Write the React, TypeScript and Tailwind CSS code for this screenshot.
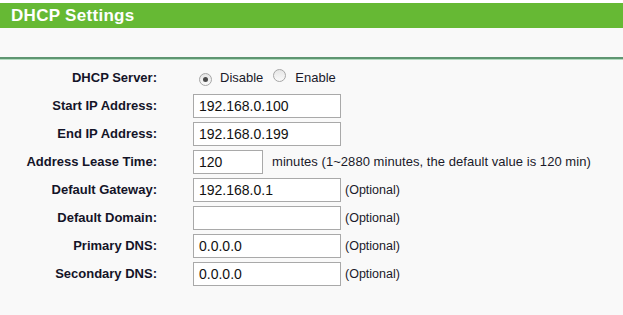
import React from "react";

const Radio = ({ checked }: { checked?: boolean }) => (
  <span className="inline-flex h-[13px] w-[13px] items-center justify-center rounded-full border border-[#a6a6a6] bg-gradient-to-b from-[#e6e6e6] to-[#fafafa]">
    {checked ? <span className="h-[5px] w-[5px] rounded-full bg-[#4a4a4a]" /> : null}
  </span>
);

const Field = ({ value, w = "w-[148px]" }: { value: string; w?: string }) => (
  <div className={`flex h-[24px] ${w} items-center border border-[#a9a9a9] bg-white pl-[5px] text-[14px] text-[#111]`}>
    {value}
  </div>
);

const Row = ({ label, children }: { label: string; children: React.ReactNode }) => (
  <div className="flex h-[28px] items-center">
    <div className="w-[157px] text-right text-[13px] font-bold text-[#141428]">{label}</div>
    <div className="ml-[36px] flex items-center">{children}</div>
  </div>
);

const Opt = () => <span className="ml-[4px] text-[12.5px] text-[#1a1a2a]">(Optional)</span>;

export default function App() {
  return (
    <div
      className="h-[315px] w-[623px] bg-[#f9f9f9]"
      style={{ fontFamily: '"Liberation Sans", Arial, sans-serif' }}
    >
      <div className="h-[3px] bg-white" />
      <div className="flex h-[25px] items-center bg-[#66b934] pl-[11px] text-[17px] font-bold tracking-[0.3px] text-white">
        DHCP Settings
      </div>
      <div className="h-[29px]" />
      <div className="h-[2px] bg-[#5f9672]" />
      <div className="h-[1px] bg-[#b3dcc0]" />
      <div className="pt-[4px]">
        <Row label="DHCP Server:">
          <div className="flex items-center text-[13px] text-[#1a1a2a]">
            <span className="ml-[6px]"><Radio checked /></span>
            <span className="ml-[8px]">Disable</span>
            <span className="ml-[10px]"><Radio /></span>
            <span className="ml-[9px]">Enable</span>
          </div>
        </Row>
        <Row label="Start IP Address:">
          <Field value="192.168.0.100" />
        </Row>
        <Row label="End IP Address:">
          <Field value="192.168.0.199" />
        </Row>
        <Row label="Address Lease Time:">
          <Field value="120" w="w-[70px]" />
          <span className="ml-[9px] text-[13px] tracking-[0.05px] text-[#1a1a2a]">
            minutes (1~2880 minutes, the default value is 120 min)
          </span>
        </Row>
        <Row label="Default Gateway:">
          <Field value="192.168.0.1" />
          <Opt />
        </Row>
        <Row label="Default Domain:">
          <Field value="" />
          <Opt />
        </Row>
        <Row label="Primary DNS:">
          <Field value="0.0.0.0" />
          <Opt />
        </Row>
        <Row label="Secondary DNS:">
          <Field value="0.0.0.0" />
          <Opt />
        </Row>
      </div>
    </div>
  );
}
